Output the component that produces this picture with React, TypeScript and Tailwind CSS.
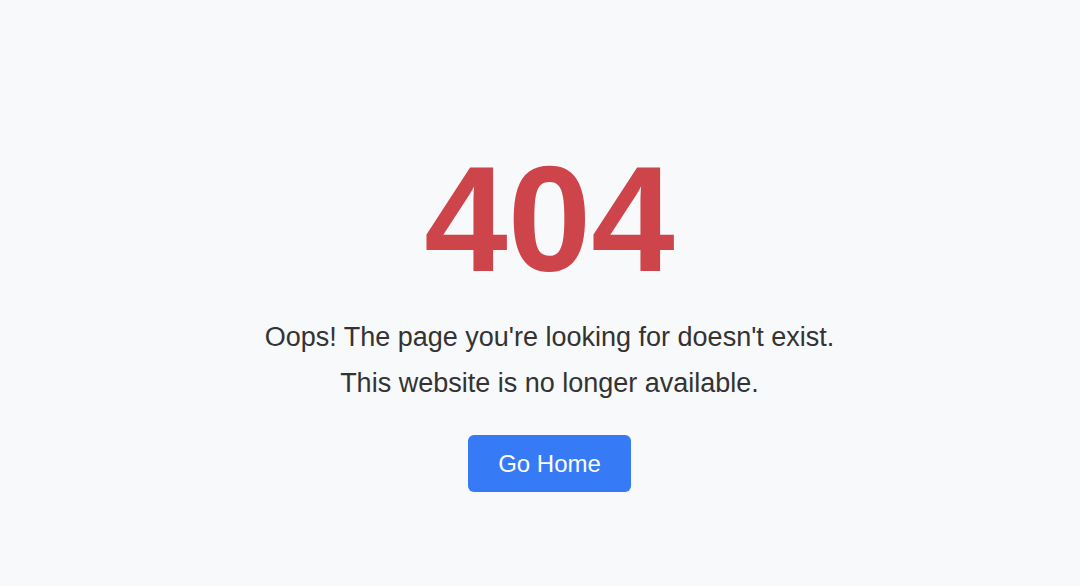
export default function App() {
  return (
    <div className="min-h-screen bg-[#f8f9fa] flex items-center justify-center pl-[19px] pt-[34px] font-['Liberation_Sans',Arial,sans-serif]">
      <div className="text-center">
        <h1 className="text-[150px] leading-[1.2] font-bold text-[#cd454b]">404</h1>
        <p className="mt-[5px] text-[27px] leading-[46px] text-[#333]">
          Oops! The page you're looking for doesn't exist.
        </p>
        <p className="text-[27px] leading-[46px] text-[#333]">This website is no longer available.</p>
        <a
          href="#"
          className="inline-block mt-[29px] px-[30px] py-[14px] text-[24px] leading-[29px] text-white bg-[#377af5] rounded-md"
        >
          Go Home
        </a>
      </div>
    </div>
  );
}
